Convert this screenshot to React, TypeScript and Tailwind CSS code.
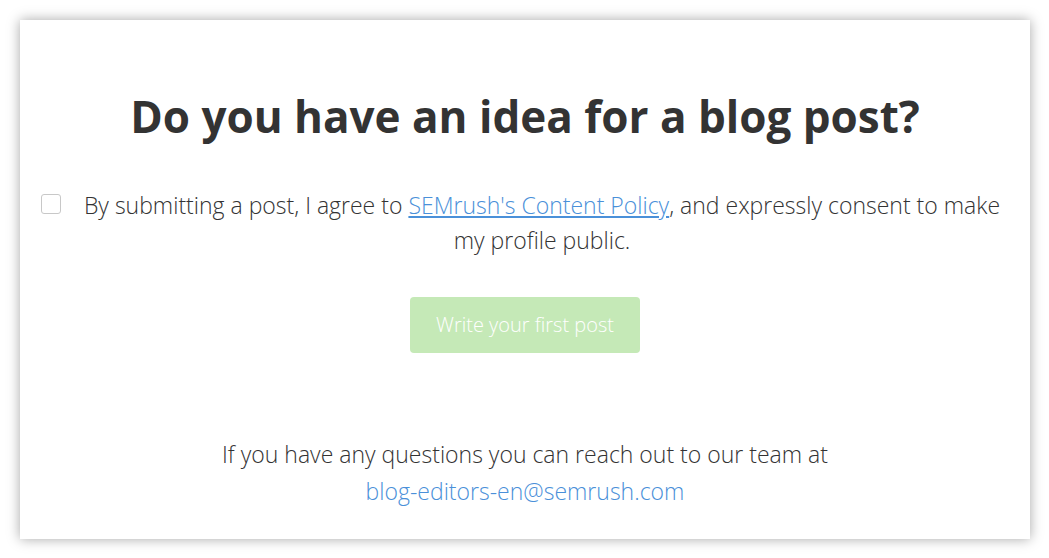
import React from 'react';

export default function App() {
  return (
    <div className="min-h-[558px] w-full bg-white p-[20px] pb-[19px]" style={{ fontFamily: '"Open Sans", "Liberation Sans", sans-serif' }}>
      <div className="h-[519px] w-[1010px] bg-white shadow-[0_0_12px_rgba(0,0,0,0.35)] pt-[66px] text-[#333]">
        {/* Title */}
        <h1 className="text-center text-[44px] font-bold leading-[60px] text-[#333]">
          Do you have an idea for a blog post?
        </h1>

        {/* Consent */}
        <div className="mt-[42px] flex items-start pl-[21px] gap-[22px]">
          <span className="mt-[6px] block h-[20px] w-[20px] shrink-0 rounded-[3px] border border-[#c8c8c8] bg-white" />
          <p className="w-[918px] text-center text-[23px] font-light leading-[35px] text-[#333]">
            By submitting a post, I agree to{' '}
            <a href="#" className="text-[#4a90d9] underline">SEMrush's Content Policy</a>
            <span>, and expressly consent to make my profile public.</span>
          </p>
        </div>

        {/* Button */}
        <div className="mt-[39px] flex justify-center">
          <button className="h-[56px] w-[230px] rounded-[4px] bg-[#c5e9b7] text-[20px] font-light text-white">
            Write your first post
          </button>
        </div>

        {/* Footer */}
        <div className="mt-[83px] text-center text-[23px] font-light leading-[37px] text-[#333]">
          <p>If you have any questions you can reach out to our team at</p>
          <a href="#" className="text-[#4a90d9]">blog-editors-en@semrush.com</a>
        </div>
      </div>
    </div>
  );
}
